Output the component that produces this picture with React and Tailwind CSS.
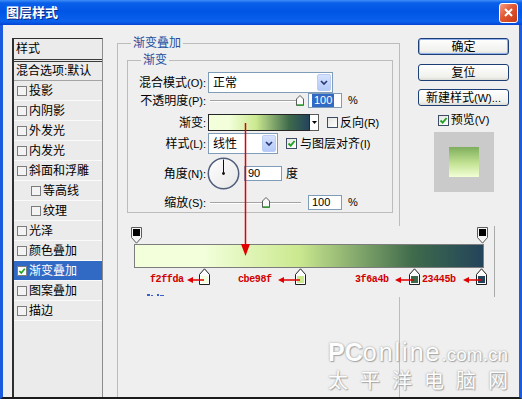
import React from 'react'

const styleItems = [
    { name: '投影' },
    { name: '内阴影' },
    { name: '外发光' },
    { name: '内发光' },
    { name: '斜面和浮雕' },
    { name: '等高线', sub: true },
    { name: '纹理', sub: true },
    { name: '光泽' },
    { name: '颜色叠加' },
    { name: '渐变叠加', on: true },
    { name: '图案叠加' },
    { name: '描边' },
]

// positions are px from the left edge of the gradient bar
const colorStops = [
    { x: 70, color: '#f2ffda', label: 'f2ffda', labelX: 16, tip: 53 },
    { x: 166, color: '#cbe98f', label: 'cbe98f', labelX: 104, tip: 144 },
    { x: 280, color: '#3f6a4b', label: '3f6a4b', labelX: 221, tip: 261 },
    { x: 347, color: '#23445b', label: '23445b', labelX: 288, tip: 329 },
]
const opacityStops = [2, 348]

function GreenTick({ size = 9 }) {
    return (
        <svg width={size} height={size} viewBox="0 0 9 9">
            <path d="M1.5 4.5 L3.7 6.7 L7.6 2" fill="none" stroke="#1fa51f" strokeWidth="1.9" />
        </svg>
    )
}

function ListCheck({ on }) {
    return (
        <span className={`w-[10px] h-[10px] shrink-0 border border-[#7c7c7c] flex items-center justify-center ${on ? 'bg-white' : 'bg-[#f3f3f3]'}`}>
            {on && <GreenTick size={8} />}
        </span>
    )
}

function Check({ on, className = '' }) {
    return (
        <span className={`w-[11px] h-[11px] shrink-0 border border-[#3d4b63] bg-[linear-gradient(135deg,#e4e4e0,#ffffff)] flex items-center justify-center ${className}`}>
            {on && <GreenTick size={9} />}
        </span>
    )
}

function Key({ children }) {
    return <span className="text-[11px] font-['Liberation_Sans',sans-serif]">{children}</span>
}

function Row({ label, k, className, children }) {
    return (
        <div className={`flex items-center ${className}`}>
            <div className="w-[78px] shrink-0 text-right leading-[14px] whitespace-nowrap">
                {label}<Key>{k}</Key>
            </div>
            <div className="flex items-center ml-[2px]">{children}</div>
        </div>
    )
}

function Select({ className, value }) {
    return (
        <div className={`h-[21px] border border-[#7f9db9] bg-white flex items-center justify-between pl-[4px] pr-[1px] ${className}`}>
            <span className="leading-[14px]">{value}</span>
            <span className="w-[14px] h-[17px] rounded-[2px] border border-[#bccdf3] bg-[linear-gradient(#d6e2fd,#b4caf8)] flex items-center justify-center">
                <svg width="8" height="5" viewBox="0 0 8 5">
                    <path d="M1 1 L4 4 L7 1" fill="none" stroke="#283a78" strokeWidth="1.7" />
                </svg>
            </span>
        </div>
    )
}

function Field({ className, children }) {
    return (
        <div className={`h-[15px] border border-[#7f9db9] bg-white flex items-center pl-[3px] text-[11px] leading-[13px] font-['Liberation_Sans',sans-serif] ${className}`}>
            {children}
        </div>
    )
}

function Slider({ thumb }) {
    return (
        <svg width="100" height="15" viewBox="0 0 100 15" className="shrink-0">
            <line x1="2" y1="7.5" x2="93" y2="7.5" stroke="#a3a3a3" />
            <line x1="2" y1="8.5" x2="93" y2="8.5" stroke="#ffffff" />
            <path d={`M${thumb - 3.5} 6 L${thumb} 2.5 L${thumb + 3.5} 6 V12.5 H${thumb - 3.5} Z`} fill="#fafafa" stroke="#5c5c5c" />
            <line x1={thumb - 3} y1="12" x2={thumb + 3} y2="12" stroke="#2fa32f" strokeWidth="1.5" />
        </svg>
    )
}

function Btn({ primary, className = '', children }) {
    return (
        <div className={`h-[17px] rounded-[3px] border border-[#1d3f73] bg-[linear-gradient(#ffffff,#f0f0ec_80%,#dcdcd6)] flex items-center justify-center leading-[14px] ${primary ? 'shadow-[inset_0_0_0_1px_#8fb0ec]' : ''} ${className}`}>
            {children}
        </div>
    )
}

function TitleBar() {
    return (
        <div className="h-[25px] shrink-0 flex items-center justify-between pl-[6px] pr-[4px] bg-[linear-gradient(#3f8ef8,#0a5fe9_12%,#0055e5_45%,#0a61ec_85%,#0444d6)]">
            <span className="text-white font-bold text-[13px] leading-[16px] [text-shadow:1px_1px_0_#0b2a80]">图层样式</span>
            <div className="w-[19px] h-[20px] rounded-[3px] border border-white bg-[linear-gradient(135deg,#f5a084,#e25632_45%,#c43b18)] flex items-center justify-center">
                <svg width="11" height="11" viewBox="0 0 11 11">
                    <path d="M2 2 L9 9 M9 2 L2 9" stroke="#ffffff" strokeWidth="2" />
                </svg>
            </div>
        </div>
    )
}

function StyleList() {
    return (
        <div className="mt-[13px] w-[91px] h-[380px] shrink-0 bg-[#ebebeb] border-t border-l-2 border-r border-t-[#2f2f2f] border-l-[#2f2f2f] border-r-[#8c8c8c]">
            <div className="h-[23px] flex items-center pl-[2px] leading-[14px] border-b-[3px] border-double border-b-[#3a3a3a]">样式</div>
            <div className="h-[19px] flex items-center pl-[2px] leading-[14px] border-b border-b-[#a4a4a4]">混合选项:默认</div>
            {styleItems.map((s) => (
                <div key={s.name}
                    className={`h-[20px] flex items-center gap-[2px] border-b border-b-[#fafafa] ${s.sub ? 'pl-[17px]' : 'pl-[3px]'} ${s.on ? 'bg-[#316ac5] text-white' : ''}`}>
                    <ListCheck on={s.on} />
                    <span className="leading-[14px] whitespace-nowrap">{s.name}</span>
                </div>
            ))}
        </div>
    )
}

function Options() {
    return (
        <fieldset className="ml-[14px] mt-[11px] w-[283px] h-[380px] shrink-0 border border-[#bcbcbc]">
            <legend className="ml-[13px] px-[2px] leading-[14px] text-[#1f4e9e]">渐变叠加</legend>
            <fieldset className="ml-[9px] mt-[3px] w-[266px] border border-[#bcbcbc] pb-[2px]">
                <legend className="ml-[13px] px-[2px] leading-[14px] text-[#1f4e9e]">渐变</legend>

                <Row label="混合模式" k="(O):" className="mt-[5px] h-[21px]">
                    <Select className="w-[125px]" value="正常" />
                </Row>

                <Row label="不透明度" k="(P):" className="h-[15px]">
                    <Slider thumb={92} />
                    <Field className="w-[34px] pl-[1px]">
                        <span className="bg-[#316ac5] text-white px-[2px]">100</span>
                    </Field>
                    <span className="ml-[6px] text-[11px] font-['Liberation_Sans',sans-serif]">%</span>
                </Row>

                <Row label="渐变" k=":" className="mt-[6px] h-[17px]">
                    <div className="w-[102px] h-[17px] border border-[#262626] bg-[linear-gradient(to_right,#f2ffda_20%,#cbe98f_47%,#3f6a4b_80%,#23445b)]" />
                    <div className="w-[9px] h-[17px] border border-l-0 border-[#5a5a5a] bg-white flex items-center justify-center">
                        <svg width="5" height="3" viewBox="0 0 5 3"><path d="M0 0 H5 L2.5 3 Z" fill="#000" /></svg>
                    </div>
                    <Check className="ml-[8px]" />
                    <span className="ml-[2px] leading-[14px] whitespace-nowrap">反向<Key>(R)</Key></span>
                </Row>

                <Row label="样式" k="(L):" className="mt-[2px] h-[21px]">
                    <Select className="w-[70px]" value="线性" />
                    <Check on className="ml-[8px]" />
                    <span className="ml-[3px] leading-[14px] whitespace-nowrap">与图层对齐<Key>(I)</Key></span>
                </Row>

                <Row label="角度" k="(N):" className="mt-[3px] h-[33px]">
                    <svg width="33" height="33" viewBox="0 0 33 33" className="-ml-[1px] shrink-0">
                        <defs>
                            <linearGradient id="dial" x1="0" y1="0" x2="1" y2="1">
                                <stop offset="0" stopColor="#ffffff" />
                                <stop offset="1" stopColor="#e6e6e6" />
                            </linearGradient>
                        </defs>
                        <circle cx="16.5" cy="16.5" r="15.2" fill="url(#dial)" stroke="#4e5d7c" strokeWidth="1.5" />
                        <line x1="16.5" y1="16.5" x2="16.5" y2="2.5" stroke="#111" strokeWidth="1" />
                        <circle cx="16.5" cy="16.5" r="1.4" fill="#111" />
                    </svg>
                    <Field className="ml-[4px] w-[38px]">90</Field>
                    <span className="ml-[4px] leading-[14px]">度</span>
                </Row>

                <Row label="缩放" k="(S):" className="mt-[5px] h-[15px]">
                    <Slider thumb={58} />
                    <Field className="w-[34px]">100</Field>
                    <span className="ml-[6px] text-[11px] font-['Liberation_Sans',sans-serif]">%</span>
                </Row>
            </fieldset>
        </fieldset>
    )
}

function Buttons() {
    return (
        <div className="ml-[18px] mt-[13px] w-[91px] shrink-0 flex flex-col">
            <Btn primary>确定</Btn>
            <Btn className="mt-[9px]">复位</Btn>
            <Btn className="mt-[8px]">新建样式<Key>(W)...</Key></Btn>
            <div className="mt-[7px] h-[14px] flex items-center justify-center">
                <Check on />
                <span className="ml-[2px] leading-[14px]">预览<Key>(V)</Key></span>
            </div>
            <div className="mt-[5px] mx-auto w-[60px] h-[60px] bg-[#cacaca] flex items-center justify-center">
                <div className="w-[30px] h-[30px] bg-[linear-gradient(#7eae5c,#c4e394_55%,#f2ffd6)]" />
            </div>
        </div>
    )
}

function OpacityStop({ x }) {
    return (
        <svg width="11" height="17" viewBox="0 0 11 17" className="absolute top-0" style={{ left: x - 5.5 }}>
            <path d="M0.5 0.5 H10.5 V10.5 L5.5 16.2 L0.5 10.5 Z" fill="#f4f4f4" stroke="#5a5a5a" />
            <rect x="2" y="2" width="7" height="7" fill="#000" />
        </svg>
    )
}

function ColorStop({ x, color }) {
    return (
        <svg width="11" height="17" viewBox="0 0 11 17" className="absolute top-0" style={{ left: x - 5.5 }}>
            <path d="M0.5 6.5 L5.5 0.8 L10.5 6.5 V16.5 H0.5 Z" fill="#ffffff" stroke="#1e1e1e" />
            <rect x="2" y="8" width="7" height="7" fill={color} />
        </svg>
    )
}

function GradientEditor() {
    return (
        <div className="absolute left-[120px] top-[226px] w-[375px] h-[71px] bg-[#efefef] border-r border-r-[#aaaaaa] pl-[14px] pt-[1px]">
            <div className="relative w-[350px] h-[17px]">
                {opacityStops.map((x) => <OpacityStop key={x} x={x} />)}
            </div>
            <div className="w-[350px] h-[24px] border border-[#7d7d7d] bg-[linear-gradient(to_right,#f2ffda_20%,#cbe98f_47%,#3f6a4b_80%,#23445b)]" />
            <div className="relative w-[350px] h-[17px]">
                {colorStops.map((s) => <ColorStop key={s.label} x={s.x} color={s.color} />)}
                {colorStops.map((s) => (
                    <span key={s.label}
                        className="absolute top-[6px] font-['Liberation_Mono',monospace] font-bold text-[10px] tracking-[-0.4px] leading-[12px] text-[#d10000]"
                        style={{ left: s.labelX }}>
                        {s.label}
                    </span>
                ))}
                <svg width="350" height="17" viewBox="0 0 350 17" className="absolute left-0 top-0">
                    {colorStops.map((s) => (
                        <g key={s.label}>
                            <line x1={s.tip + 5} y1="12" x2={s.x} y2="12" stroke="#e00000" strokeWidth="1.5" />
                            <path d={`M${s.tip} 12 L${s.tip + 6} 9 L${s.tip + 6} 15 Z`} fill="#e00000" />
                        </g>
                    ))}
                </svg>
            </div>
            <svg width="18" height="4" viewBox="0 0 18 4" className="ml-[13px] mt-[8px]">
                <rect x="0" y="1" width="3" height="2" fill="#3b5fd0" />
                <rect x="4" y="2" width="2" height="1" fill="#3b5fd0" />
                <rect x="10" y="1" width="2" height="2" fill="#3b5fd0" />
                <rect x="13" y="2" width="4" height="1" fill="#3b5fd0" />
            </svg>
        </div>
    )
}

function BigArrow() {
    return (
        <svg width="12" height="140" viewBox="0 0 12 140" className="absolute left-[240px] top-[120px]">
            <line x1="5.5" y1="3" x2="5.5" y2="126" stroke="#e00000" strokeWidth="1.5" />
            <path d="M1 124 L10 124 L5.5 136 Z" fill="#e00000" />
        </svg>
    )
}

function Watermark() {
    return (
        <div className="absolute left-[328px] top-[340px] text-white opacity-90 whitespace-nowrap [text-shadow:0_0_2px_#8d8d8d,1px_1px_1px_#a6a6a6]">
            <div className="leading-[25px] font-['Liberation_Sans',sans-serif]">
                <span className="text-[25px] font-bold">PC</span>
                <span className="text-[25px] tracking-[2px]">online</span>
                <span className="text-[19px]">.com.cn</span>
            </div>
            <div className="text-[20px] leading-[20px] tracking-[12px] font-['Noto_Sans_CJK_SC',sans-serif]">太平洋电脑网</div>
        </div>
    )
}

export default function App() {
    return (
        <div className="relative w-[522px] h-[399px] overflow-hidden flex flex-col font-['Liberation_Sans','Noto_Sans_CJK_SC',sans-serif] text-[12px] text-black">
            <TitleBar />
            <div className="flex-1 min-h-0 flex items-start overflow-hidden bg-[#efefef] border-x-[3px] border-x-[#1a5be0] border-b-2 border-b-[#1b1b1b] pl-[9px]">
                <StyleList />
                <Options />
                <Buttons />
            </div>
            <GradientEditor />
            <BigArrow />
            <Watermark />
        </div>
    )
}
